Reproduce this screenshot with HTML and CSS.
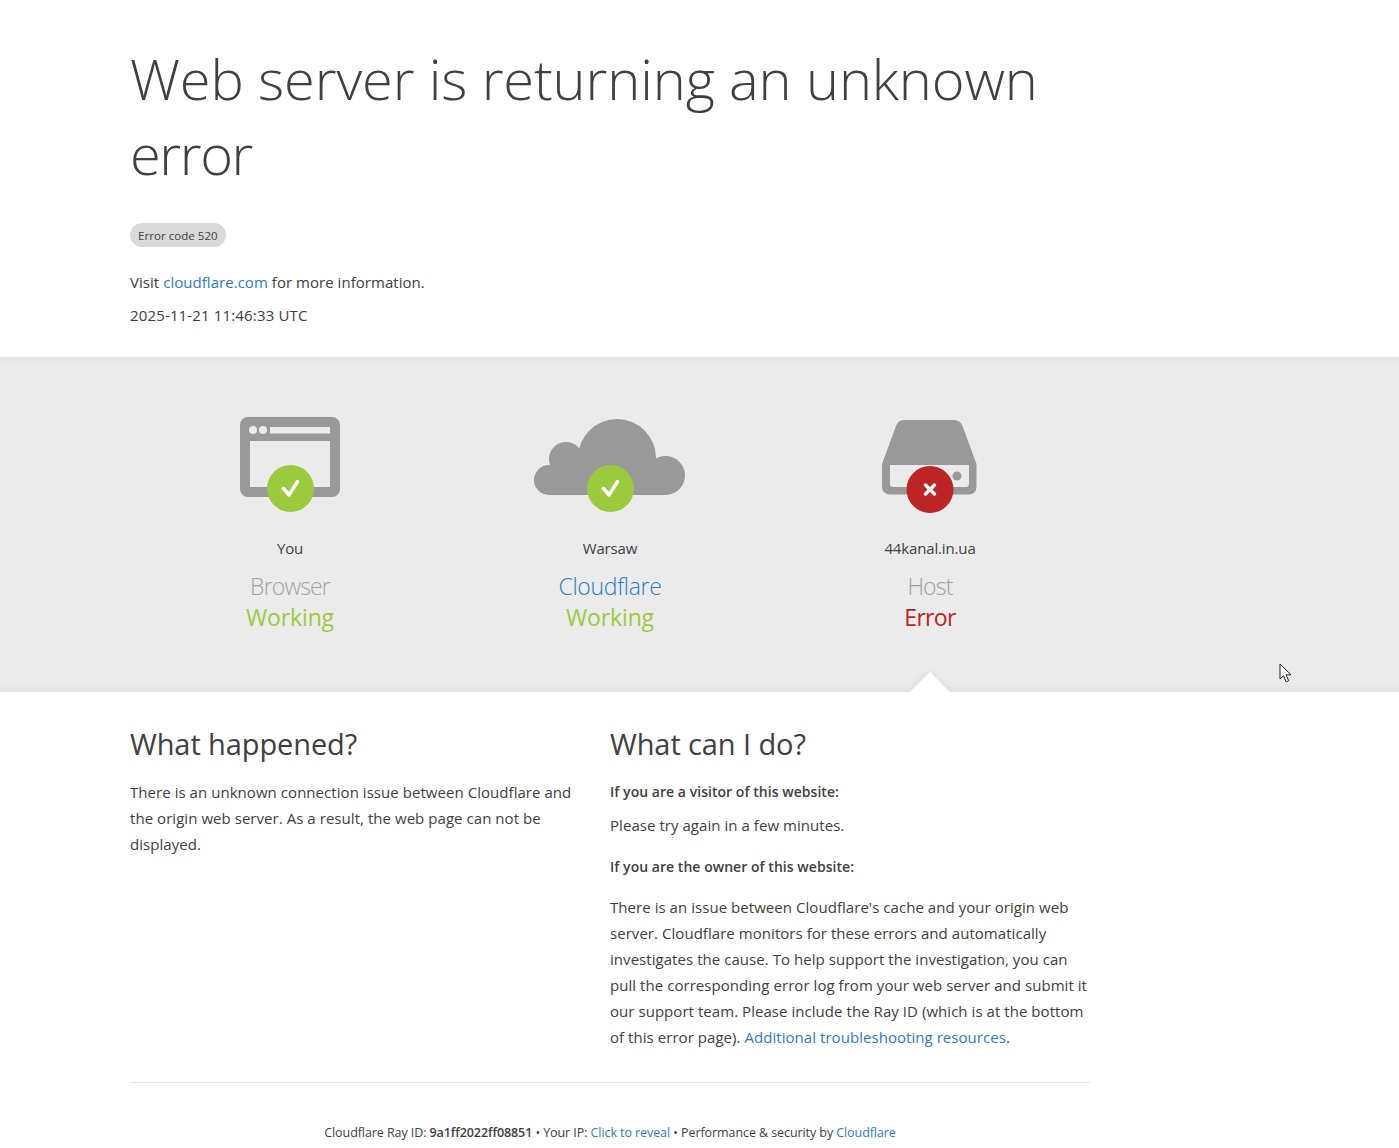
FILE: index.html
```html
<!DOCTYPE html>
<html lang="en">
<head>
<meta charset="utf-8">
<title>Web server is returning an unknown error</title>
<link rel="stylesheet" href="styles.css">
</head>
<body>
<header class="top wrap">
  <h1 class="title">Web server is returning an unknown <span class="tight">error</span></h1>
  <div class="badge-row"><span class="code">Error code 520</span></div>
  <p class="meta">Visit <a href="#">cloudflare.com</a> for more information.</p>
  <p class="meta stamp">2025-11-21 11:46:33 UTC</p>
</header>
<section class="status">
  <div class="wrap cols">
    <div class="col">
      <div class="icon">
        <svg width="320" height="100" viewBox="130 415 320 100">
          <path class="g" fill-rule="evenodd" d="M248 417h84a8 8 0 0 1 8 8v64a8 8 0 0 1-8 8h-84a8 8 0 0 1-8-8v-64a8 8 0 0 1 8-8zM250 441v46h80v-46zM270 427v6.500h60v-6.500z"/>
          <circle class="bg" cx="253" cy="430" r="4"/><circle class="bg" cx="263" cy="430" r="4"/>
          <circle class="ok" cx="290.500" cy="488.500" r="23.500"/>
          <path class="mark" d="M283.500 488.500l5.500 6.500 8.500-13.500"/>
        </svg>
      </div>
      <p class="place">You</p>
      <p class="name muted">Browser</p>
      <p class="state good">Working</p>
    </div>
    <div class="col">
      <div class="icon">
        <svg width="320" height="100" viewBox="450 415 320 100">
          <g class="g">
            <circle cx="617" cy="458" r="39"/><circle cx="566" cy="459" r="17"/>
            <circle cx="549" cy="480" r="15"/><circle cx="665.500" cy="475.500" r="19.500"/>
            <rect x="549" y="465" width="116" height="30"/>
          </g>
          <circle class="ok" cx="610.500" cy="488.500" r="23.500"/>
          <path class="mark" d="M603.500 488.500l5.500 6.500 8.500-13.500"/>
        </svg>
      </div>
      <p class="place">Warsaw</p>
      <p class="name link-blue">Cloudflare</p>
      <p class="state good">Working</p>
    </div>
    <div class="col">
      <div class="icon">
        <svg width="320" height="100" viewBox="770 415 320 100">
          <path class="g" fill-rule="evenodd" d="M904 420h50q6 0 8.500 6l14 38v22q0 8.500-8 8.500h-78q-8.500 0-8.500-8.500v-22l14-38q2-6 8-6zM890 465v19q0 3 3 3h73q3 0 3-3v-19z"/>
          <circle class="g" cx="957" cy="476" r="4.500"/>
          <circle class="bad" cx="930" cy="489.500" r="23.500"/>
          <path class="mark" d="M925.500 485l9 9m0-9l-9 9"/>
        </svg>
      </div>
      <p class="place">44kanal.in.ua</p>
      <p class="name muted-blue">Host</p>
      <p class="state err">Error</p>
    </div>
  </div>
  <span class="notch"></span>
  <svg class="cursor" width="14" height="20" viewBox="0 0 14 20"><path d="M1 1v15l3.500-3.200 2.600 6 2.600-1.100-2.600-5.900h4.900z" fill="#fff" stroke="#222" stroke-width="1"/></svg>
</section>
<main class="wrap info">
  <div class="explain">
    <div class="pane narrow">
      <h2 class="sub">What happened?</h2>
      <p class="para">There is an unknown connection issue between Cloudflare and the origin web server. As a result, the web page can not be displayed.</p>
    </div>
    <div class="pane">
      <h2 class="sub">What can I do?</h2>
      <h3 class="ask">If you are a visitor of this website:</h3>
      <p class="para gap">Please try again in a few minutes.</p>
      <h3 class="ask ask-wide">If you are the owner of this website:</h3>
      <p class="para">There is an issue between Cloudflare's cache and your origin web server. Cloudflare monitors for these errors and automatically investigates the cause. To help support the investigation, you can pull the corresponding error log from your web server and submit it our support team. Please include the Ray ID (which is at the bottom of this error page). <a href="#">Additional troubleshooting resources</a>.</p>
    </div>
  </div>
  <footer class="foot">
    <span>Cloudflare Ray ID: <strong>9a1ff2022ff08851</strong></span> • <span>Your IP: <a href="#">Click to reveal</a></span> • <span>Performance &amp; security by <a href="#">Cloudflare</a></span>
  </footer>
</main>
</body>
</html>
```
FILE: styles.css
```css
* { box-sizing: border-box; }
html, body { margin: 0; padding: 0; }
body {
  font-family: "Open Sans", "Noto Sans", "Liberation Sans", sans-serif;
  color: #404040;
  background: #fff;
  font-size: 14px;
  height: 1148px;
  overflow: hidden;
}
a { color: #2f7bbf; text-decoration: none; }
p, h1, h2, h3 { margin: 0; }
.wrap { width: 960px; margin-left: 130px; }

.top { height: 357px; padding-top: 41px; }
.title {
  font-size: 56px;
  line-height: 75px;
  font-weight: 300;
  letter-spacing: -0.12px;
  color: #404040;
  width: 960px;
}
.tight { letter-spacing: -1.4px; }
.badge-row { margin-top: 32px; height: 24px; }
.code {
  display: inline-block;
  height: 24px;
  line-height: 25px;
  padding: 0 8px;
  width: 96px;
  white-space: nowrap;
  border-radius: 12px;
  background: #d9d9d9;
  font-size: 11.500px;
  letter-spacing: 0.05px;
  font-weight: 500;
  color: #404040;
}
.meta { margin-top: 22px; line-height: 26px; font-size: 15px; letter-spacing: 0.04px; }
.stamp { margin-top: 7px; letter-spacing: 0.15px; }

.status {
  position: relative;
  height: 335px;
  background: #ebebeb;
  box-shadow: inset 0 10px 8px -8px #dcdcdc, inset 0 -10px 8px -8px #dcdcdc;
  padding-top: 58px;
  overflow: hidden;
}
.cols { display: flex; }
.col { width: 320px; text-align: center; }
.icon { height: 100px; }
.icon svg { display: block; }
.g { fill: #999; }
.bg { fill: #ebebeb; }
.ok { fill: #9bca3e; }
.bad { fill: #bd2426; }
.mark { fill: none; stroke: #fff; stroke-width: 3.500px; stroke-linecap: round; stroke-linejoin: round; }
.place { margin-top: 20px; font-size: 15px; line-height: 26px; letter-spacing: -0.15px; color: #404040; }
.name { font-size: 23px; line-height: 31px; margin-top: 10px; font-weight: 300; letter-spacing: -0.3px; }
.state { font-size: 23px; line-height: 31px; font-weight: 400; letter-spacing: -0.15px; }
.muted { color: #a6a39c; letter-spacing: -0.85px; }
.muted-blue { color: #99a1a8; letter-spacing: -0.8px; }
.link-blue { color: #2f7bbf; }
.good { color: #9bca3e; }
.err { color: #bd2426; letter-spacing: -0.7px; }
.notch {
  position: absolute;
  left: 910px;
  bottom: 0;
  width: 0;
  height: 0;
  border-left: 20px solid transparent;
  border-right: 20px solid transparent;
  border-bottom: 20px solid #fff;
  filter: drop-shadow(0 -1px 3px #dcdcdc);
}
.cursor { position: absolute; left: 1279px; top: 306px; }

.info { padding-top: 33px; }
.explain { display: grid; grid-template-columns: 480px 480px; padding-bottom: 32px; border-bottom: 1px solid #e6e6e6; }
.narrow { padding-right: 30px; }
.sub { font-size: 29px; line-height: 38px; font-weight: 400; letter-spacing: -0.1px; color: #404040; margin-bottom: 16px; }
.para { font-size: 15px; line-height: 26px; letter-spacing: 0.05px; }
.ask { font-size: 14px; line-height: 26px; font-weight: 600; letter-spacing: 0.04px; margin-bottom: 7px; }
.ask-wide { margin-bottom: 14px; }
.gap { margin-bottom: 16px; }
.foot { margin-top: 40px; text-align: center; font-size: 12.500px; line-height: 20px; letter-spacing: -0.08px; }
.foot strong { font-weight: 600; }
```
